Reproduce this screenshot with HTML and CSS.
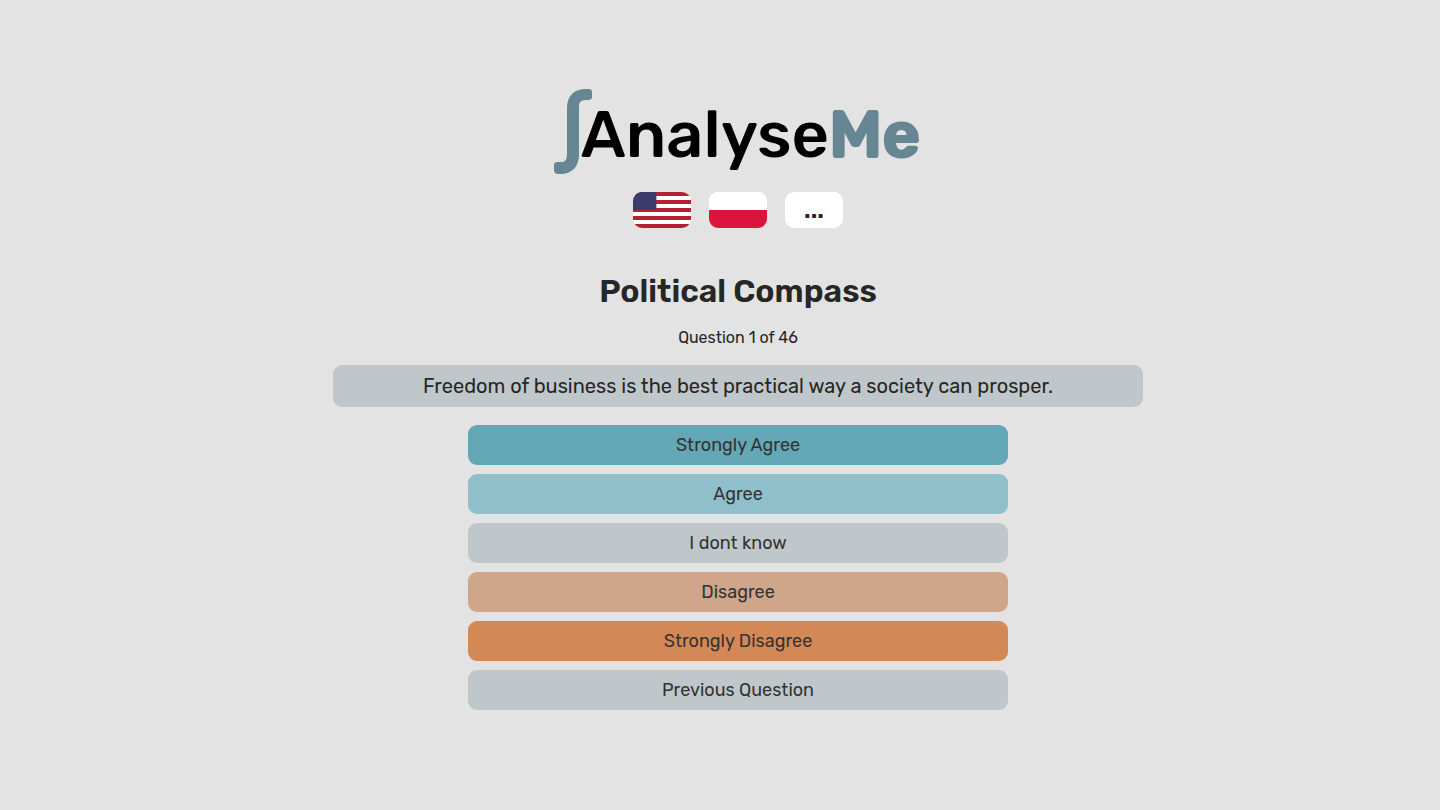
FILE: index.html
```html
<!DOCTYPE html>
<html lang="en">
<head>
<meta charset="utf-8">
<meta name="viewport" content="width=device-width, initial-scale=1">
<title>AnalyseMe - Political Compass</title>
<link rel="stylesheet" href="styles.css">
</head>
<body>
<main class="page">
  <a class="logo" href="#">
    <svg class="logo-mark" viewBox="0 0 40 86" aria-hidden="true">
      <path d="M0 78C0 75 1 74 4 74H8Q13 74 13 66V20C13 8 20 1 32 1H35Q38 1 38 4V9Q38 12 34 12H31Q25 12 25 18V66C25 79 18 86 6 86H4Q0 86 0 82Z"/>
    </svg>
    <span class="logo-name">Analyse</span><span class="logo-me">Me</span>
  </a>
  <nav class="languages" aria-label="Language">
    <button class="flag" type="button" aria-label="English">
      <svg viewBox="0 0 57 36" preserveAspectRatio="none" aria-hidden="true">
        <path fill="#fff" d="M0 0H57V36H0Z"/>
        <path fill="#b22234" d="M0 0H57V4H0ZM0 8H57V12H0ZM0 16H57V20H0ZM0 24H57V28H0ZM0 32H57V36H0Z"/>
        <path fill="#3c3b6e" d="M0 0H23V18H0Z"/>
      </svg>
    </button>
    <button class="flag" type="button" aria-label="Polski">
      <svg viewBox="0 0 57 36" preserveAspectRatio="none" aria-hidden="true">
        <path fill="#fff" d="M0 0H57V18H0Z"/>
        <path fill="#dc143c" d="M0 18H57V36H0Z"/>
      </svg>
    </button>
    <button class="flag flag-more" type="button">...</button>
  </nav>
  <h1 class="title">Political Compass</h1>
  <p class="progress">Question 1 of 46</p>
  <p class="question">Freedom of business is the best practical way a society can prosper.</p>
  <div class="answers">
    <button class="answer strongly-agree" type="button">Strongly Agree</button>
    <button class="answer agree" type="button">Agree</button>
    <button class="answer" type="button">I dont know</button>
    <button class="answer disagree" type="button">Disagree</button>
    <button class="answer strongly-disagree" type="button">Strongly Disagree</button>
    <button class="answer" type="button">Previous Question</button>
  </div>
</main>
</body>
</html>
```
FILE: styles.css
```css
* {
  box-sizing: border-box;
}

body {
  margin: 0;
  background: #e3e3e3;
  color: #262626;
  font-family: Rubik, Inter, Roboto, sans-serif;
  font-weight: 400;
}

.page {
  display: flex;
  flex-direction: column;
  align-items: center;
  padding: 88px 0 36px 36px;
}

.logo {
  display: flex;
  align-items: center;
  height: 86px;
  color: #000;
  font-size: 65px;
  line-height: 86px;
  text-decoration: none;
}

.logo-mark {
  width: 40px;
  height: 86px;
  margin-right: -13px;
  fill: #678693;
}

.logo-name {
  padding-top: 8px;
  font-weight: 500;
}

.logo-me {
  padding: 8px 2px 0 0;
  color: #678693;
  font-weight: 600;
  -webkit-text-stroke: 2px #678693;
}

.languages {
  display: flex;
  gap: 18px;
  margin-top: 18px;
}

.flag {
  width: 58px;
  height: 36px;
  padding: 0;
  overflow: hidden;
  border: 0;
  border-radius: 9px;
  background: #fff;
  color: #262626;
  cursor: pointer;
}

.flag svg {
  display: block;
  width: 100%;
  height: 100%;
}

.flag-more {
  font-family: inherit;
  font-size: 24px;
  font-weight: 600;
  line-height: 36px;
}

.title {
  margin: 44px 0 0;
  font-size: 32px;
  font-weight: 600;
  line-height: 38px;
}

.progress {
  margin: 17px 0 0;
  font-size: 16px;
  line-height: 22px;
}

.question {
  width: 100%;
  max-width: 810px;
  margin: 16px 0 0;
  padding: 9px;
  border-radius: 9px;
  background: #c0c7ca;
  font-size: 20px;
  line-height: 24px;
  text-align: center;
}

.answers {
  display: flex;
  flex-direction: column;
  gap: 9px;
  width: 100%;
  max-width: 540px;
  margin-top: 18px;
}

.answer {
  padding: 8px;
  border: 0;
  border-radius: 9px;
  background: #c0c7ca;
  color: #333;
  font-family: inherit;
  font-size: 18px;
  line-height: 24px;
  cursor: pointer;
}

.strongly-agree {
  background: #64a7b6;
}

.agree {
  background: #8ebfca;
}

.disagree {
  background: #d0a68a;
}

.strongly-disagree {
  background: #d38855;
}
```
